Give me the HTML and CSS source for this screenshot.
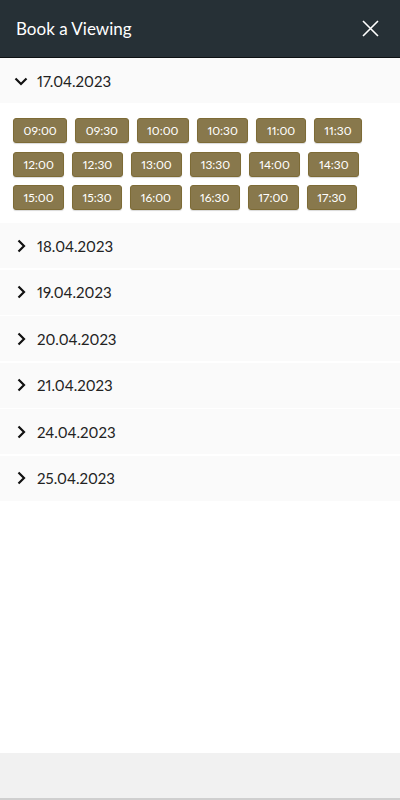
FILE: index.html
```html
<!DOCTYPE html>
<html lang="en">
<head>
    <meta charset="UTF-8">
    <meta name="viewport" content="width=device-width, initial-scale=1.0">
    <title>Book a Viewing</title>
    <link rel="stylesheet" href="styles.css">
</head>
<body>
    <div class="page">
        <header class="topbar">
            <h1>Book a Viewing</h1>
            <button class="close" aria-label="Close">
                <svg width="17" height="17" viewBox="0 0 17 17"><path d="M1 1L16 16M16 1L1 16" stroke="#fff" stroke-width="1.6" fill="none"/></svg>
            </button>
        </header>

        <main class="days">
            <div class="day open">
                <svg class="chev" width="14" height="14" viewBox="0 0 14 14"><path d="M1.5 4.5L7 10L12.5 4.5" stroke="#111" stroke-width="2.2" fill="none"/></svg>
                <span>17.04.2023</span>
            </div>
            <div class="slots">
                <button class="slot">09:00</button>
                <button class="slot">09:30</button>
                <button class="slot">10:00</button>
                <button class="slot">10:30</button>
                <button class="slot">11:00</button>
                <button class="slot">11:30</button>
                <button class="slot">12:00</button>
                <button class="slot">12:30</button>
                <button class="slot">13:00</button>
                <button class="slot">13:30</button>
                <button class="slot">14:00</button>
                <button class="slot">14:30</button>
                <button class="slot">15:00</button>
                <button class="slot">15:30</button>
                <button class="slot">16:00</button>
                <button class="slot">16:30</button>
                <button class="slot">17:00</button>
                <button class="slot">17:30</button>
            </div>

            <div class="day">
                <svg class="chev" width="14" height="14" viewBox="0 0 14 14"><path d="M4.5 1.5L10 7L4.5 12.5" stroke="#111" stroke-width="2.2" fill="none"/></svg>
                <span>18.04.2023</span>
            </div>
            <div class="day">
                <svg class="chev" width="14" height="14" viewBox="0 0 14 14"><path d="M4.5 1.5L10 7L4.5 12.5" stroke="#111" stroke-width="2.2" fill="none"/></svg>
                <span>19.04.2023</span>
            </div>
            <div class="day">
                <svg class="chev" width="14" height="14" viewBox="0 0 14 14"><path d="M4.5 1.5L10 7L4.5 12.5" stroke="#111" stroke-width="2.2" fill="none"/></svg>
                <span>20.04.2023</span>
            </div>
            <div class="day">
                <svg class="chev" width="14" height="14" viewBox="0 0 14 14"><path d="M4.5 1.5L10 7L4.5 12.5" stroke="#111" stroke-width="2.2" fill="none"/></svg>
                <span>21.04.2023</span>
            </div>
            <div class="day">
                <svg class="chev" width="14" height="14" viewBox="0 0 14 14"><path d="M4.5 1.5L10 7L4.5 12.5" stroke="#111" stroke-width="2.2" fill="none"/></svg>
                <span>24.04.2023</span>
            </div>
            <div class="day">
                <svg class="chev" width="14" height="14" viewBox="0 0 14 14"><path d="M4.5 1.5L10 7L4.5 12.5" stroke="#111" stroke-width="2.2" fill="none"/></svg>
                <span>25.04.2023</span>
            </div>
        </main>

        <footer class="bottombar"></footer>
    </div>
</body>
</html>
```

FILE: styles.css
```css
* {
    box-sizing: border-box;
}
body {
    margin: 0;
    font-family: 'Lato', 'Liberation Sans', sans-serif;
    font-variant-numeric: proportional-nums;
    background-color: #fff;
    color: #222;
}
.page {
    height: 800px;
    display: flex;
    flex-direction: column;
}
.topbar {
    height: 58px;
    background-color: #263036;
    border-bottom: 1px solid #0d1113;
    display: flex;
    align-items: center;
    justify-content: space-between;
    padding: 0 21px 0 16px;
}
.topbar h1 {
    margin: 0;
    color: #fff;
    font-size: 17px;
    font-weight: 400;
}
.close {
    background: none;
    border: none;
    padding: 0;
    width: 17px;
    height: 17px;
    cursor: pointer;
}
.close svg {
    display: block;
}
.days {
    flex: 1;
}
.day {
    height: 45px;
    background-color: #fafafa;
    display: flex;
    align-items: center;
    padding-left: 14px;
    font-size: 15px;
    margin-bottom: 1.5px;
}
.day.open {
    margin-bottom: 0;
}
.chev {
    margin-right: 9px;
    flex-shrink: 0;
}
.slots {
    display: flex;
    flex-wrap: wrap;
    gap: 8.5px 8px;
    padding: 15px 13px 13px;
}
.slot {
    height: 25px;
    padding: 0 9.5px;
    font-family: inherit;
    font-size: 12px;
    font-variant-numeric: proportional-nums;
    color: #fff;
    background-color: #88784c;
    border: 1px solid #7d6b36;
    border-radius: 3px;
    box-shadow: 0 1px 1px rgba(0, 0, 0, 0.15);
    cursor: pointer;
}
.bottombar {
    height: 47px;
    background-color: #f1f1f1;
    border-bottom: 2px solid #cfcfcf;
}
```
